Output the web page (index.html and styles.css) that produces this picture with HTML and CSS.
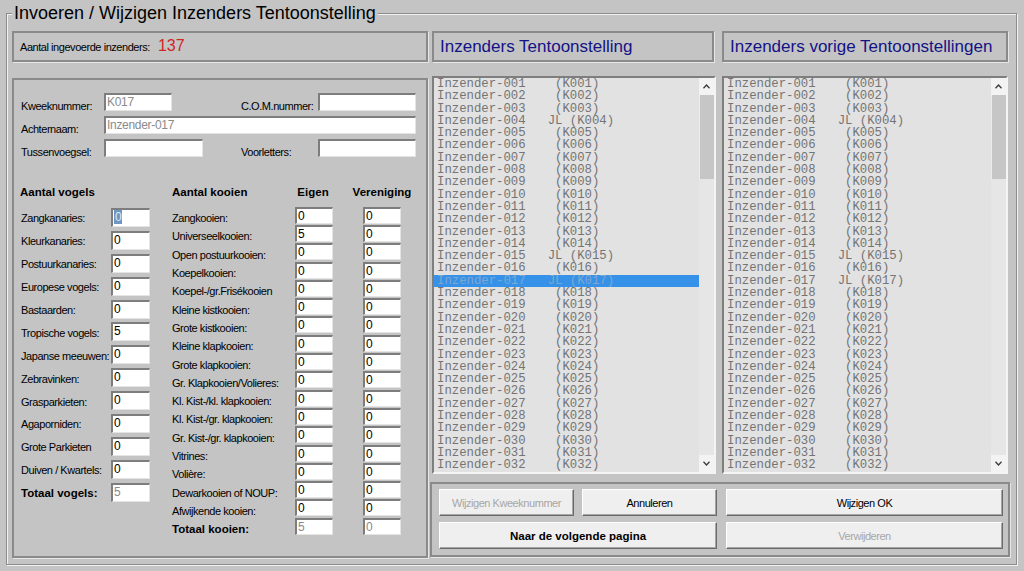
FILE: index.html
```html
<!DOCTYPE html>
<html lang="nl">
<head>
<meta charset="utf-8">
<title>Invoeren / Wijzigen Inzenders Tentoonstelling</title>
<link rel="stylesheet" href="styles.css">
</head>
<body>
<div class="group">
  <h1 class="group-title">Invoeren / Wijzigen Inzenders Tentoonstelling</h1>
  <div class="layout">
    <div class="left">
      <div class="panel count-panel">
        <span class="count-label">Aantal ingevoerde inzenders:</span><span class="count">137</span>
      </div>
      <div class="panel form-panel">
        <div class="frow">
          <span class="lbl lbl-main">Kweeknummer:</span><span class="field dis w68">K017</span>
          <span class="lbl lbl-second gap69">C.O.M.nummer:</span><span class="field w98"></span>
        </div>
        <div class="frow">
          <span class="lbl lbl-main">Achternaam:</span><span class="field dis w312">Inzender-017</span>
        </div>
        <div class="frow">
          <span class="lbl lbl-main">Tussenvoegsel:</span><span class="field w99"></span>
          <span class="lbl lbl-second gap38">Voorletters:</span><span class="field w98"></span>
        </div>

        <div class="cols">
          <div class="col-birds">
            <div class="head-row"><span class="hd">Aantal vogels</span></div>
            <div class="brow"><span class="blbl">Zangkanaries:</span><span class="field bfield"><span class="sel">0</span></span></div>
            <div class="brow"><span class="blbl">Kleurkanaries:</span><span class="field bfield">0</span></div>
            <div class="brow"><span class="blbl">Postuurkanaries:</span><span class="field bfield">0</span></div>
            <div class="brow"><span class="blbl">Europese vogels:</span><span class="field bfield">0</span></div>
            <div class="brow"><span class="blbl">Bastaarden:</span><span class="field bfield">0</span></div>
            <div class="brow"><span class="blbl">Tropische vogels:</span><span class="field bfield">5</span></div>
            <div class="brow"><span class="blbl">Japanse meeuwen:</span><span class="field bfield">0</span></div>
            <div class="brow"><span class="blbl">Zebravinken:</span><span class="field bfield">0</span></div>
            <div class="brow"><span class="blbl">Grasparkieten:</span><span class="field bfield">0</span></div>
            <div class="brow"><span class="blbl">Agaporniden:</span><span class="field bfield">0</span></div>
            <div class="brow"><span class="blbl">Grote Parkieten</span><span class="field bfield">0</span></div>
            <div class="brow"><span class="blbl">Duiven / Kwartels:</span><span class="field bfield">0</span></div>
            <div class="brow"><span class="blbl hd">Totaal vogels:</span><span class="field bfield dis">5</span></div>
          </div>

          <div class="col-cages">
            <div class="head-row">
              <span class="hd hd-cages">Aantal kooien</span><span class="hd hd-eigen">Eigen</span><span class="hd hd-ver">Vereniging</span>
            </div>
            <div class="crow"><span class="clbl">Zangkooien:</span><span class="field cfield">0</span><span class="field cfield c2">0</span></div>
            <div class="crow"><span class="clbl">Universeelkooien:</span><span class="field cfield">5</span><span class="field cfield c2">0</span></div>
            <div class="crow"><span class="clbl">Open postuurkooien:</span><span class="field cfield">0</span><span class="field cfield c2">0</span></div>
            <div class="crow"><span class="clbl">Koepelkooien:</span><span class="field cfield">0</span><span class="field cfield c2">0</span></div>
            <div class="crow"><span class="clbl">Koepel-/gr.Frisékooien</span><span class="field cfield">0</span><span class="field cfield c2">0</span></div>
            <div class="crow"><span class="clbl">Kleine kistkooien:</span><span class="field cfield">0</span><span class="field cfield c2">0</span></div>
            <div class="crow"><span class="clbl">Grote kistkooien:</span><span class="field cfield">0</span><span class="field cfield c2">0</span></div>
            <div class="crow"><span class="clbl">Kleine klapkooien:</span><span class="field cfield">0</span><span class="field cfield c2">0</span></div>
            <div class="crow"><span class="clbl">Grote klapkooien:</span><span class="field cfield">0</span><span class="field cfield c2">0</span></div>
            <div class="crow"><span class="clbl">Gr. Klapkooien/Volieres:</span><span class="field cfield">0</span><span class="field cfield c2">0</span></div>
            <div class="crow"><span class="clbl">Kl. Kist-/kl. klapkooien:</span><span class="field cfield">0</span><span class="field cfield c2">0</span></div>
            <div class="crow"><span class="clbl">Kl. Kist-/gr. klapkooien:</span><span class="field cfield">0</span><span class="field cfield c2">0</span></div>
            <div class="crow"><span class="clbl">Gr. Kist-/gr. klapkooien:</span><span class="field cfield">0</span><span class="field cfield c2">0</span></div>
            <div class="crow"><span class="clbl">Vitrines:</span><span class="field cfield">0</span><span class="field cfield c2">0</span></div>
            <div class="crow"><span class="clbl">Volière:</span><span class="field cfield">0</span><span class="field cfield c2">0</span></div>
            <div class="crow"><span class="clbl">Dewarkooien of NOUP:</span><span class="field cfield">0</span><span class="field cfield c2">0</span></div>
            <div class="crow"><span class="clbl">Afwijkende kooien:</span><span class="field cfield">0</span><span class="field cfield c2">0</span></div>
            <div class="crow"><span class="clbl hd">Totaal kooien:</span><span class="field cfield dis">5</span><span class="field cfield c2 dis">0</span></div>
          </div>
        </div>
      </div>
    </div>

    <div class="right">
      <div class="heads">
        <div class="panel head head1">Inzenders Tentoonstelling</div>
        <div class="panel head head2">Inzenders vorige Tentoonstellingen</div>
      </div>
      <div class="lists">
        <div class="listbox list1">
          <div class="items">
<div class="item">Inzender-001    (K001)</div>
<div class="item">Inzender-002    (K002)</div>
<div class="item">Inzender-003    (K003)</div>
<div class="item">Inzender-004   JL (K004)</div>
<div class="item">Inzender-005    (K005)</div>
<div class="item">Inzender-006    (K006)</div>
<div class="item">Inzender-007    (K007)</div>
<div class="item">Inzender-008    (K008)</div>
<div class="item">Inzender-009    (K009)</div>
<div class="item">Inzender-010    (K010)</div>
<div class="item">Inzender-011    (K011)</div>
<div class="item">Inzender-012    (K012)</div>
<div class="item">Inzender-013    (K013)</div>
<div class="item">Inzender-014    (K014)</div>
<div class="item">Inzender-015   JL (K015)</div>
<div class="item">Inzender-016    (K016)</div>
<div class="item selected">Inzender-017   JL (K017)</div>
<div class="item">Inzender-018    (K018)</div>
<div class="item">Inzender-019    (K019)</div>
<div class="item">Inzender-020    (K020)</div>
<div class="item">Inzender-021    (K021)</div>
<div class="item">Inzender-022    (K022)</div>
<div class="item">Inzender-023    (K023)</div>
<div class="item">Inzender-024    (K024)</div>
<div class="item">Inzender-025    (K025)</div>
<div class="item">Inzender-026    (K026)</div>
<div class="item">Inzender-027    (K027)</div>
<div class="item">Inzender-028    (K028)</div>
<div class="item">Inzender-029    (K029)</div>
<div class="item">Inzender-030    (K030)</div>
<div class="item">Inzender-031    (K031)</div>
<div class="item">Inzender-032    (K032)</div>
          </div>
          <div class="sbar">
            <div class="sb-btn"><svg width="7" height="5" viewBox="0 0 7 5"><polyline points="0.5,4.2 3.5,1 6.5,4.2" fill="none" stroke="#3a3a3a" stroke-width="1.3"/></svg></div>
            <div class="sb-thumb"></div>
            <div class="sb-track"></div>
            <div class="sb-btn"><svg width="7" height="5" viewBox="0 0 7 5"><polyline points="0.5,0.8 3.5,4 6.5,0.8" fill="none" stroke="#3a3a3a" stroke-width="1.3"/></svg></div>
          </div>
        </div>
        <div class="listbox list2">
          <div class="items">
<div class="item">Inzender-001    (K001)</div>
<div class="item">Inzender-002    (K002)</div>
<div class="item">Inzender-003    (K003)</div>
<div class="item">Inzender-004   JL (K004)</div>
<div class="item">Inzender-005    (K005)</div>
<div class="item">Inzender-006    (K006)</div>
<div class="item">Inzender-007    (K007)</div>
<div class="item">Inzender-008    (K008)</div>
<div class="item">Inzender-009    (K009)</div>
<div class="item">Inzender-010    (K010)</div>
<div class="item">Inzender-011    (K011)</div>
<div class="item">Inzender-012    (K012)</div>
<div class="item">Inzender-013    (K013)</div>
<div class="item">Inzender-014    (K014)</div>
<div class="item">Inzender-015   JL (K015)</div>
<div class="item">Inzender-016    (K016)</div>
<div class="item">Inzender-017   JL (K017)</div>
<div class="item">Inzender-018    (K018)</div>
<div class="item">Inzender-019    (K019)</div>
<div class="item">Inzender-020    (K020)</div>
<div class="item">Inzender-021    (K021)</div>
<div class="item">Inzender-022    (K022)</div>
<div class="item">Inzender-023    (K023)</div>
<div class="item">Inzender-024    (K024)</div>
<div class="item">Inzender-025    (K025)</div>
<div class="item">Inzender-026    (K026)</div>
<div class="item">Inzender-027    (K027)</div>
<div class="item">Inzender-028    (K028)</div>
<div class="item">Inzender-029    (K029)</div>
<div class="item">Inzender-030    (K030)</div>
<div class="item">Inzender-031    (K031)</div>
<div class="item">Inzender-032    (K032)</div>
          </div>
          <div class="sbar">
            <div class="sb-btn"><svg width="7" height="5" viewBox="0 0 7 5"><polyline points="0.5,4.2 3.5,1 6.5,4.2" fill="none" stroke="#3a3a3a" stroke-width="1.3"/></svg></div>
            <div class="sb-thumb"></div>
            <div class="sb-track"></div>
            <div class="sb-btn"><svg width="7" height="5" viewBox="0 0 7 5"><polyline points="0.5,0.8 3.5,4 6.5,0.8" fill="none" stroke="#3a3a3a" stroke-width="1.3"/></svg></div>
          </div>
        </div>
      </div>
      <div class="panel btn-panel">
        <button class="btn" disabled>Wijzigen Kweeknummer</button>
        <button class="btn">Annuleren</button>
        <button class="btn btn-right">Wijzigen OK</button>
        <button class="btn btn-bold btn-wide">Naar de volgende pagina</button>
        <button class="btn btn-right" disabled>Verwijderen</button>
      </div>
    </div>
  </div>
</div>
</body>
</html>
```

FILE: styles.css
```css
* { box-sizing: border-box; }

html, body {
  margin: 0;
  padding: 0;
}

body {
  width: 1024px;
  height: 571px;
  overflow: hidden;
  background: #c4c4c4;
  color: #000;
  font-family: "Liberation Sans", Arial, sans-serif;
  font-size: 11px;
}

/* outer group box */
.group {
  margin: 13px 0 0 6px;
  width: 1011px;
  height: 552px;
  border: 1px solid #8c8c8c;
  box-shadow: inset 1px 1px 0 #f2f2f2, 1px 1px 0 #f2f2f2;
}

.group-title {
  display: table;
  margin: -11px 0 0 5px;
  padding: 0 2px;
  background: #c4c4c4;
  font: 400 18px/21px "Liberation Sans", Arial, sans-serif;
  color: #000;
}

.layout {
  display: flex;
  margin-top: 7px;
  padding-left: 5px;
}

.left { width: 416px; }
.right { width: 580px; margin-left: 2px; }

.panel {
  border: 2px solid #8a8a8a;
  box-shadow: 1px 1px 0 #e6e6e6;
}

/* counter panel */
.count-panel {
  height: 31px;
  display: flex;
  align-items: baseline;
  padding: 4px 0 0 6px;
}
.count-label {
  line-height: 18px;
  letter-spacing: -0.45px;
}
.count {
  margin-left: 8px;
  font-size: 16px;
  line-height: 18px;
  color: #d02626;
}

/* form panel */
.form-panel {
  margin-top: 16px;
  height: 480px;
  padding: 13px 0 0 7px;
  letter-spacing: -0.45px;
}

.frow {
  display: flex;
  align-items: flex-start;
  height: 18px;
  margin-bottom: 5px;
}
.lbl { margin-top: 6px; line-height: 14px; white-space: nowrap; }
.lbl-main { width: 83px; }
.lbl-second { width: 77px; }
.gap69 { margin-left: 69px; }
.gap38 { margin-left: 38px; }

.field {
  display: block;
  height: 18px;
  background: #fff;
  border-top: 2px solid #7d7d7d;
  border-left: 2px solid #7d7d7d;
  border-right: 1px solid #e4e4e4;
  border-bottom: 1px solid #e4e4e4;
  padding-left: 1px;
  font-size: 12px;
  line-height: 14px;
  letter-spacing: -0.3px;
  color: #000;
  white-space: nowrap;
  overflow: hidden;
}
.field.dis { color: #8a8a8a; }
.w68 { width: 68px; }
.w98 { width: 98px; }
.w99 { width: 99px; }
.w312 { width: 312px; }

.sel {
  display: inline-block;
  padding: 0 1px;
  background: #6f97c6;
  color: #dfe8f2;
}

.cols {
  display: flex;
  margin-top: 28px;
}

.head-row {
  display: flex;
  height: 14px;
  margin-bottom: 7px;
  margin-left: -1px;
}
.hd {
  font-weight: bold;
  font-size: 11.5px;
  line-height: 14px;
  letter-spacing: 0;
  white-space: nowrap;
}

/* birds column */
.col-birds { width: 129px; }
.brow {
  display: flex;
  align-items: center;
  height: 22.9px;
}
.blbl { width: 90px; line-height: 14px; white-space: nowrap; padding-top: 2px; }
.bfield { width: 39px; height: 19px; }

/* cages column */
.col-cages { margin-left: 22px; }
.hd-cages { width: 123px; margin-left: 1px; }
.hd-eigen { width: 38px; text-align: center; margin-left: -1px; }
.hd-ver { width: 76px; margin-left: 12px; text-align: center; }

.crow {
  display: flex;
  align-items: center;
  height: 18.3px;
}
.clbl { width: 123px; line-height: 14px; white-space: nowrap; padding-top: 6px; }
.cfield { width: 38px; height: 17px; }
.c2 { margin-left: 30px; }

/* right side */
.heads {
  display: flex;
  justify-content: space-between;
  padding: 0 2px;
}
.head {
  height: 31px;
  padding-left: 6px;
  font-size: 17px;
  line-height: 27px;
  color: #131386;
  white-space: nowrap;
}
.head1 { width: 282px; }
.head2 { width: 286px; }

.lists {
  display: flex;
  justify-content: space-between;
  margin-top: 14px;
  padding: 0 2px;
}
.listbox {
  display: flex;
  height: 398px;
  background: #e2e2e2;
  border-top: 2px solid #7e7e7e;
  border-left: 2px solid #7e7e7e;
  border-right: 2px solid #f4f4f4;
  border-bottom: 2px solid #f4f4f4;
  overflow: hidden;
}
.list1 { width: 284px; }
.list2 { width: 286px; }

.items {
  flex: 1;
  overflow: hidden;
  font-family: "Liberation Mono", "Courier New", monospace;
  font-size: 12.3px;
  line-height: 12.3px;
  color: #747474;
}
.item {
  height: 12.3px;
  padding-left: 3px;
  white-space: pre;
}
.item.selected {
  background: #3592e8;
  color: #7fa6cf;
}

.sbar {
  display: flex;
  flex-direction: column;
  width: 15px;
}
.sb-btn {
  height: 17px;
  display: flex;
  align-items: center;
  justify-content: center;
  background: #f3f3f3;
}
.sb-thumb {
  height: 84px;
  background: #c6c6c6;
  border-left: 1px solid #ececec;
}
.sb-track {
  flex: 1;
  background: #e6e6e6;
}

/* buttons */
.btn-panel {
  margin-top: 8px;
  height: 75px;
  padding: 5px 0 0 7px;
  display: grid;
  grid-template-columns: 135px 135px 278px;
  grid-template-rows: 27px 27px;
  column-gap: 8px;
  row-gap: 6px;
  align-content: start;
}
.btn {
  margin: 0;
  padding: 0;
  height: 27px;
  background: #efefef;
  border: 1px solid;
  border-color: #ffffff #6a6a6a #6a6a6a #ffffff;
  box-shadow: inset -1px -1px 0 #a6a6a6;
  font-family: "Liberation Sans", Arial, sans-serif;
  font-size: 11px;
  letter-spacing: -0.45px;
  color: #000;
}
.btn:disabled { color: #a6a6a6; }
.btn-bold { font-weight: bold; font-size: 11.5px; letter-spacing: 0; }
.btn-wide { grid-column: 1 / 3; }
.btn-right { grid-column: 3; margin-left: 1px; }
```
